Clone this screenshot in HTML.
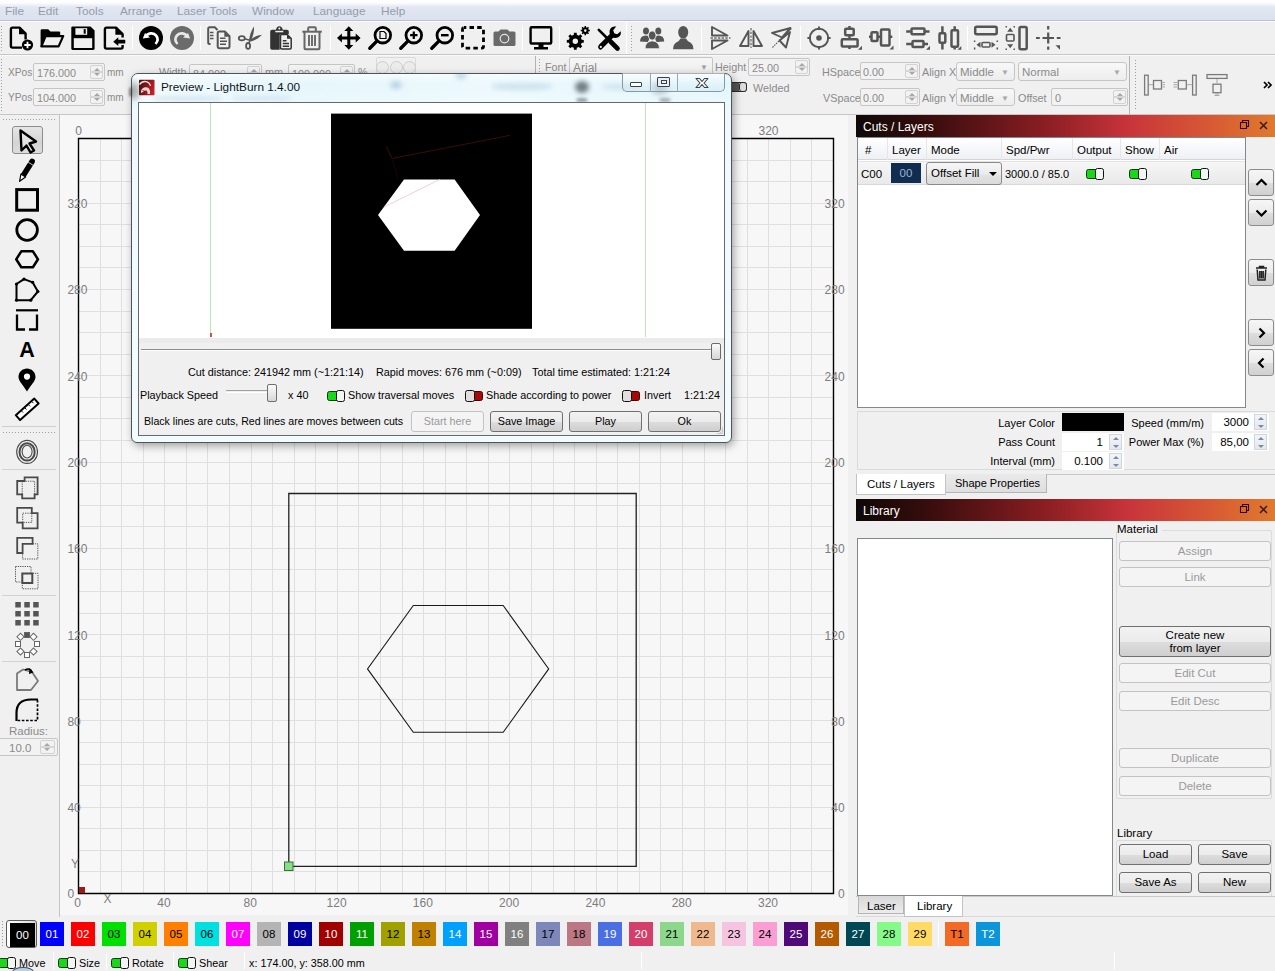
<!DOCTYPE html>
<html><head><meta charset="utf-8">
<style>
*{box-sizing:border-box;margin:0;padding:0}
html,body{width:1275px;height:971px;overflow:hidden;background:#f0f0f0;font-family:"Liberation Sans",sans-serif;font-size:11px;color:#000;position:relative}
.a{position:absolute}
.t{position:absolute;white-space:nowrap;line-height:1}
#menubar{left:0;top:0;width:1275px;height:21px;background:linear-gradient(#ffffff 0px,#fbfcfd 3px,#e2e7f1 7px,#dbe2ee 19px);border-bottom:1px solid #b9c1cd}
#menubar .t{top:5.5px;font-size:11.8px;color:#959cab}
.sep{position:absolute;width:1px;background:#c9c9c9;border-right:1px solid #fff}
.grip{position:absolute;width:3px;background-image:radial-gradient(#9a9a9a 0.7px,transparent 0.8px);background-size:3px 3px}
.ib{position:absolute}
.spin{position:absolute;background:#f2f2f2;border:1px solid #c5c5c5;border-radius:2px;color:#8a8a8a;font-size:11.5px}
.spin .v{position:absolute;left:3px;top:3px;font-size:10.8px}
.spin .ar{position:absolute;right:1px;top:1px;bottom:1px;width:13px;border:1px solid #d2d2d2;border-radius:2px;background:linear-gradient(transparent 45%,#d6d6d6 45%,#d6d6d6 55%,transparent 55%)}
.lbl{position:absolute;white-space:nowrap;color:#8a8a8a;font-size:10.8px;line-height:1}
.btn{position:absolute;border:1px solid #707070;border-radius:3px;background:linear-gradient(#f2f2f2,#ebebeb 50%,#dddddd 51%,#cfcfcf);text-align:center;font-size:11.5px;color:#000}
.btnd{position:absolute;border:1px solid #c3c3c3;border-radius:3px;background:#f4f4f4;text-align:center;font-size:11.5px;color:#9a9a9a}
.pc{font-size:11.5px;text-align:center;line-height:24px}
.tg{position:absolute;width:16px;height:10px}
.tg::before{content:"";position:absolute;left:0;top:1px;width:10px;height:8px;background:#18d818;border:1.2px solid #0c3a0c;border-radius:2.5px 0 0 2.5px}
.tg::after{content:"";position:absolute;left:8.5px;top:0;width:7.5px;height:10px;border:1.4px solid #101010;border-radius:2.5px;background:#f2f6f2}
.stt{top:958px;font-size:10.8px;color:#000}
.cmb{position:absolute;border:1px solid #c5c5c5;border-radius:3px;background:linear-gradient(#f8f8f8,#ededed);color:#8a8a8a;font-size:11.5px}
.cb{position:absolute;right:5px;top:6px;font-size:8px;color:#a8a8a8;line-height:1}
.spin .ar::before{content:"";position:absolute;left:3px;top:2px;border-left:3px solid transparent;border-right:3px solid transparent;border-bottom:3.5px solid #a8a8a8}
.spin .ar::after{content:"";position:absolute;left:3px;bottom:2px;border-left:3px solid transparent;border-right:3px solid transparent;border-top:3.5px solid #a8a8a8}
.ttl{background:linear-gradient(90deg,#0e0808 0%,#3a0d0d 18%,#8a1e22 45%,#c8343a 65%,#d85a34 85%,#e07a2c 100%)}
.ttl .t{color:#fff;font-size:12px;top:6px !important}
.hd{top:145px;font-size:11.5px;color:#000}
.sbtn{position:absolute;width:26px;height:27px;border:1px solid #8c8c8c;border-radius:3px;background:linear-gradient(#f6f6f6,#ececec 50%,#dedede 51%,#d0d0d0)}
.pl{font-size:11px;color:#000}
.pspin{position:absolute;height:18px;background:#fff;font-size:11.5px}
.pspin .ar{position:absolute;right:2px;top:1px;width:13px;height:16px;border:1px solid #cfd6e0;background:linear-gradient(#f2f4f8,#e4e8ee)}
.pspin .ar::before{content:"";position:absolute;left:2.5px;top:1.5px;border-left:3px solid transparent;border-right:3px solid transparent;border-bottom:3.5px solid #7a8aa0}
.pspin .ar::after{content:"";position:absolute;left:2.5px;bottom:1.5px;border-left:3px solid transparent;border-right:3px solid transparent;border-top:3.5px solid #7a8aa0}
.lbtn{width:152px;line-height:18px}
.dt{font-size:10.8px;color:#000}
.tgr{position:absolute;width:16px;height:10px}
.tgr::before{content:"";position:absolute;left:6px;top:1px;width:10px;height:8px;background:#a80808;border:1.2px solid #3a0404;border-radius:0 2.5px 2.5px 0}
.tgr::after{content:"";position:absolute;left:0;top:0;width:7.5px;height:10px;border:1.4px solid #101010;border-radius:2.5px;background:#e2dede}
</style></head><body>

<!-- MENU BAR -->
<div id="menubar" class="a">
 <span class="t" style="left:5px">File</span>
 <span class="t" style="left:38px">Edit</span>
 <span class="t" style="left:76px">Tools</span>
 <span class="t" style="left:120px">Arrange</span>
 <span class="t" style="left:177px">Laser Tools</span>
 <span class="t" style="left:252px">Window</span>
 <span class="t" style="left:313px">Language</span>
 <span class="t" style="left:381px">Help</span>
</div>

<!-- MAIN TOOLBAR -->
<div class="a" style="left:0;top:21px;width:1275px;height:34px;border-bottom:1px solid #c6c6c6;box-shadow:inset 0 1px 0 #fbfbfb"></div>
<div class="a" style="left:0;top:25px;width:3px;height:28px;background-image:radial-gradient(#a0a0a0 0.7px,transparent 0.8px);background-size:3px 3px"></div>
<div class="sep" style="left:132px;top:26px;height:24px"></div>
<div class="sep" style="left:200px;top:26px;height:24px"></div>
<div class="sep" style="left:330px;top:26px;height:24px"></div>
<div class="sep" style="left:522px;top:26px;height:24px"></div>
<div class="sep" style="left:559px;top:26px;height:24px"></div>
<div class="sep" style="left:626px;top:22px;height:32px"></div>
<div class="a" style="left:630px;top:25px;width:3px;height:28px;background-image:radial-gradient(#a0a0a0 0.7px,transparent 0.8px);background-size:3px 3px"></div>
<div class="sep" style="left:701px;top:26px;height:24px"></div>
<div class="sep" style="left:800px;top:26px;height:24px"></div>
<div class="sep" style="left:899px;top:26px;height:24px"></div>
<div class="sep" style="left:967px;top:26px;height:24px"></div>
<svg class="a" style="left:0;top:0" width="1275" height="60" viewBox="0 0 1275 60">
<!-- new -->
<g transform="translate(9,26)">
 <path d="M13 21.6H3.5Q1.9 21.6 1.9 20V3.2Q1.9 1.6 3.5 1.6H10.5L16.6 7.7V13.5" fill="none" stroke="#000" stroke-width="2.4" stroke-linejoin="round"/>
 <path d="M10 1.6V8.3H16.6Z" fill="#000"/>
 <circle cx="18.5" cy="19" r="5.6" fill="#000"/>
 <path d="M18.5 15.8V22.2M15.3 19H21.7" stroke="#fff" stroke-width="1.8"/>
</g>
<!-- open -->
<g transform="translate(40,26)">
 <path d="M0.6 20.5V4.6Q0.6 3.2 2 3.2H8.2L10.4 5.4H19.2Q20.2 5.4 20.2 6.4V9.3H6L1.5 20.5Z" fill="#000"/>
 <path d="M5.6 10.1H23.2L18.6 20.4H1.4Z" fill="none" stroke="#000" stroke-width="2.2" stroke-linejoin="round"/>
</g>
<!-- save -->
<g transform="translate(71,26)">
 <path d="M1.5 0.5H19.5L23.6 4.6V22.6Q23.6 24 22.2 24H1.6Q0.3 24 0.3 22.6V1.7Q0.3 0.5 1.5 0.5Z" fill="#000"/>
 <rect x="4.4" y="2.2" width="11.8" height="6.6" fill="#f0f0f0"/>
 <rect x="12.7" y="3.1" width="2" height="4.6" fill="#000"/>
 <rect x="2.8" y="12.2" width="18.4" height="9.8" fill="#f0f0f0"/>
</g>
<!-- import -->
<g transform="translate(103,26)">
 <path d="M19.6 19V21Q19.6 22.6 18 22.6H3.5Q1.9 22.6 1.9 21V3.2Q1.9 1.6 3.5 1.6H13L19.6 8.2V11.5" fill="none" stroke="#000" stroke-width="2.4" stroke-linejoin="round"/>
 <path d="M12.4 1.6V8.8H19.6Z" fill="#000"/>
 <path d="M10.2 15.7L15.3 11.3V13.8H21.7Q22.3 13.8 22.3 14.4V17Q22.3 17.6 21.7 17.6H15.3V20.1Z" fill="#000"/>
</g>
<!-- undo -->
<circle cx="151" cy="38" r="12" fill="#000"/>
<path d="M146 36.5C147.5 33 153.5 32 156.2 35.6C158.5 38.6 157.3 42 155.5 44" fill="none" stroke="#fff" stroke-width="2.6"/>
<path d="M142.8 38.6L145 33L150 37.5Z" fill="#fff"/>
<!-- redo -->
<circle cx="182" cy="38" r="12" fill="#6b6b6b"/>
<path d="M187 36.5C185.5 33 179.5 32 176.8 35.6C174.5 38.6 175.7 42 177.5 44" fill="none" stroke="#e8e8e8" stroke-width="2.6"/>
<path d="M190.2 38.6L188 33L183 37.5Z" fill="#e8e8e8"/>
<!-- copy -->
<g fill="none" stroke="#555" stroke-width="2" stroke-linejoin="round">
 <path d="M209.5 44H209.8Q208.2 44 208.2 42.5V28.8Q208.2 27.3 209.8 27.3H214.8L217.5 30"/>
 <path d="M219.2 31.5H224.8L229.5 36.2V46.8Q229.5 48.2 228 48.2H219.2Q217.7 48.2 217.7 46.8V33Q217.7 31.5 219.2 31.5Z" fill="#f0f0f0"/>
</g>
<path d="M210 32.5H213.5M210 35.5H213.5M210 38.5H213.5M220 38.2H225.5M220 41.2H227M220 44.2H226" stroke="#555" stroke-width="1.5"/>
<path d="M224.3 31.5V36.7H229.5Z" fill="#555"/>
<!-- cut -->
<g fill="none" stroke="#555" stroke-width="1.8">
 <ellipse cx="241.8" cy="38.3" rx="3" ry="2.1"/>
 <ellipse cx="248.1" cy="45.9" rx="2" ry="2.9"/>
</g>
<path d="M249 40.8Q250 32 254 26.5Q254.5 34 250.5 41.5Z" fill="#555"/>
<path d="M250.5 39.5Q256 35 262 34.8Q258 39.5 251 41.5Z" fill="#555"/>
<path d="M244.5 38.8L250 40.2M248.6 43L250 41" stroke="#555" stroke-width="1.4"/>
<!-- paste -->
<path d="M272 29.8H276Q276.5 26.3 279.3 26.3Q282.2 26.3 282.7 29.8H287Q288.8 29.8 288.8 31.6V34H281Q279.7 34 279.7 35.3V49.7H272Q270.2 49.7 270.2 48V31.6Q270.2 29.8 272 29.8Z" fill="#333"/>
<path d="M275.3 30.8H283.3V32.3H275.3Z" fill="#f0f0f0"/>
<circle cx="279.3" cy="28.6" r="1" fill="#f0f0f0"/>
<path d="M281.5 34.5H287.2L291.2 38.5V47.8Q291.2 49 290 49H281.7Q280.5 49 280.5 47.8V35.5Q280.5 34.5 281.5 34.5Z" fill="#f0f0f0" stroke="#333" stroke-width="1.5" stroke-linejoin="round"/>
<path d="M287 34.5V38.8H291.2Z" fill="#333"/>
<path d="M282.8 40.8H286.5M282.8 43.5H289M282.8 46.2H289" stroke="#333" stroke-width="1.4"/>
<!-- trash -->
<g fill="none" stroke="#666" stroke-width="2">
 <path d="M302.3 31.7H321.8"/>
 <path d="M308.2 31V28.3Q308.2 27.3 309.2 27.3H314.8Q315.8 27.3 315.8 28.3V31"/>
 <path d="M304.5 32V48.2Q304.5 49.2 305.5 49.2H318.5Q319.5 49.2 319.5 48.2V32"/>
 <path d="M309 35V46M312 35V46M315 35V46" stroke-width="1.9"/>
</g>
<!-- move -->
<path d="M348.8 26.2L353.3 31H350.3V36.6H355.7V33.6L360.6 38L355.7 42.4V39.4H350.3V45H353.3L348.8 49.8L344.3 45H347.3V39.4H341.9V42.4L337 38L341.9 33.6V36.6H347.3V31H344.3Z" fill="#000"/>
<!-- zoom page -->
<g fill="none" stroke="#000">
 <circle cx="382.8" cy="35.2" r="7.8" stroke-width="2.8"/>
 <path d="M376.6 41.4L369.8 48.2" stroke-width="3.4" stroke-linecap="round"/>
 <path d="M380 31.5H384L386 33.5V38.5H380Z" stroke-width="1.2"/>
</g>
<!-- zoom in -->
<g fill="none" stroke="#000">
 <circle cx="413.8" cy="35.2" r="7.8" stroke-width="2.8"/>
 <path d="M407.6 41.4L400.8 48.2" stroke-width="3.4" stroke-linecap="round"/>
 <path d="M413.8 31.5V38.9M410.1 35.2H417.5" stroke-width="2.2"/>
</g>
<!-- zoom out -->
<g fill="none" stroke="#000">
 <circle cx="444.8" cy="35.2" r="7.8" stroke-width="2.8"/>
 <path d="M438.6 41.4L431.8 48.2" stroke-width="3.4" stroke-linecap="round"/>
 <path d="M441 35.2H448.6" stroke-width="2.4"/>
</g>
<!-- dashed select -->
<rect x="462.5" y="27.5" width="21" height="20.6" rx="1.5" fill="none" stroke="#000" stroke-width="2.8" stroke-dasharray="4.5 3.2" stroke-dashoffset="2.2"/>
<!-- camera -->
<path d="M493.5 33Q493.5 31.5 495 31.5H498.5L500.5 29.5H507.5L509.5 31.5H514Q515.5 31.5 515.5 33V44.5Q515.5 46 514 46H495Q493.5 46 493.5 44.5Z" fill="#6a6a6a"/>
<circle cx="504.5" cy="38.6" r="4.3" fill="none" stroke="#e6e6e6" stroke-width="1.2"/>
<circle cx="504.5" cy="38.6" r="3.2" fill="#6a6a6a"/>
<!-- monitor -->
<rect x="530.6" y="27.2" width="20.6" height="16.3" rx="1" fill="none" stroke="#000" stroke-width="2.4"/>
<path d="M538.5 43.5H543.5V47H548V49.5H534V47H538.5Z" fill="#000"/>
<!-- gears -->
<path d="M581.73 39.81L583.78 39.89L583.78 42.71L581.73 42.79L580.90 44.79L582.30 46.30L580.30 48.30L578.79 46.90L576.79 47.73L576.71 49.78L573.89 49.78L573.81 47.73L571.81 46.90L570.30 48.30L568.30 46.30L569.70 44.79L568.87 42.79L566.82 42.71L566.82 39.89L568.87 39.81L569.70 37.81L568.30 36.30L570.30 34.30L571.81 35.70L573.81 34.87L573.89 32.82L576.71 32.82L576.79 34.87L578.79 35.70L580.30 34.30L582.30 36.30L580.90 37.81Z M575.3 38.6A2.7 2.7 0 1 0 575.3 44A2.7 2.7 0 1 0 575.3 38.6Z" fill="#000" fill-rule="evenodd"/>
<path d="M588.61 29.83L589.84 29.84L589.84 31.36L588.61 31.37L588.18 32.40L589.04 33.27L587.97 34.34L587.10 33.48L586.07 33.91L586.06 35.14L584.54 35.14L584.53 33.91L583.50 33.48L582.63 34.34L581.56 33.27L582.42 32.40L581.99 31.37L580.76 31.36L580.76 29.84L581.99 29.83L582.42 28.80L581.56 27.93L582.63 26.86L583.50 27.72L584.53 27.29L584.54 26.06L586.06 26.06L586.07 27.29L587.10 27.72L587.97 26.86L589.04 27.93L588.18 28.80Z M585.3 29.3A1.3 1.3 0 1 0 585.3 31.9A1.3 1.3 0 1 0 585.3 29.3Z" fill="#000" fill-rule="evenodd"/>
<!-- tools -->
<path d="M598.8 29.8L607.5 38.5" stroke="#000" stroke-width="2.6" stroke-linecap="round"/>
<path d="M610.5 41.5L617.5 48.5" stroke="#000" stroke-width="4.6" stroke-linecap="round"/>
<path d="M599 44.8L609.8 34Q608.8 29.5 611.5 27.5Q613.5 26 616.2 26.6L613.2 30.2L614.2 33.2L617.2 34.2L620.8 31.2Q621.3 34 619.8 36Q617.8 38.5 613.2 37.8L602.2 48.8Q600.5 50.5 598.8 48.8Q597.2 47 599 44.8Z" fill="#000"/>
<circle cx="600.8" cy="46.9" r="1.1" fill="#f0f0f0"/>
<!-- group -->
<g fill="#555">
 <ellipse cx="646" cy="31" rx="3" ry="3.6"/><path d="M640 41.5Q640 35.5 646 35.5Q648.5 35.5 650 37L648 42Z"/>
 <ellipse cx="658.3" cy="31" rx="3" ry="3.6"/><path d="M664.2 41.5Q664.2 35.5 658.3 35.5Q655.8 35.5 654.3 37L656.5 42Z"/>
 <ellipse cx="652.2" cy="35.5" rx="3.8" ry="4.6" stroke="#f0f0f0" stroke-width="0.9"/><path d="M645 48.8Q645 41.5 652.2 40.8Q659.5 41.5 659.5 48.8Z" stroke="#f0f0f0" stroke-width="0.9"/>
</g>
<!-- ungroup -->
<g fill="#555">
 <ellipse cx="683.2" cy="32.2" rx="5" ry="6.3"/>
 <path d="M673 49.2Q673 43 678.5 41.2L680.5 38.5H686L688 41.2Q693.5 43 693.5 49.2Z"/>
</g>
<!-- mirror h -->
<g fill="none" stroke="#555" stroke-width="1.9" stroke-linejoin="round">
 <path d="M712 27V35.5H727.5Z"/>
 <path d="M712 49V40.5H727.5Z"/>
</g>
<path d="M710.5 38H730.5" stroke="#8a8a8a" stroke-width="2" stroke-dasharray="2.4 1.3"/>
<!-- mirror v -->
<g fill="none" stroke="#555" stroke-width="1.9" stroke-linejoin="round">
 <path d="M748.5 31V46H740Z"/>
 <path d="M753.5 31V46H762Z"/>
</g>
<path d="M751 28V48" stroke="#9a9a9a" stroke-width="2" stroke-dasharray="2.4 1.3"/>
<!-- rotate/skew -->
<g fill="none" stroke="#555" stroke-width="1.9" stroke-linejoin="round">
 <path d="M772 33L790.5 28L782 37.5Z"/>
 <path d="M790 32L786 47.5L779.5 40.5Z"/>
</g>
<path d="M772.5 47.5L791.5 28.5" stroke="#555" stroke-width="1.1" stroke-dasharray="1.5 1"/>
<!-- target -->
<g fill="none" stroke="#555">
 <circle cx="819" cy="38" r="9.2" stroke-width="1.9"/>
 <path d="M819 26.4V30M819 46V49.6M807.4 38H811M827 38H830.6" stroke-width="1.9"/>
</g>
<circle cx="819" cy="38" r="2.8" fill="#555"/>
<!-- align center -->
<g fill="none" stroke="#555" stroke-width="2.5">
 <rect x="845.2" y="28.8" width="8.5" height="6.5" rx="1"/>
 <rect x="841.8" y="39.2" width="15.8" height="7.3" rx="1"/>
 <path d="M849.5 26V28.5M849.5 35.5V39M849.5 46.5V49"/>
</g>
<path d="M858 49.8L862 45.8V49.8Z" fill="#555"/>
<!-- align middle -->
<g fill="none" stroke="#555" stroke-width="2.5">
 <rect x="871.5" y="32.2" width="6" height="8.7" rx="1"/>
 <rect x="881" y="29.5" width="8.5" height="16" rx="1"/>
 <path d="M869 36.7H871.5M877.5 36.7H881M889.5 36.7H892.3"/>
</g>
<path d="M889.5 49.5L893.5 45.5V49.5Z" fill="#555"/>
<!-- distribute h -->
<g fill="none" stroke="#555" stroke-width="2.5">
 <rect x="911.5" y="28.5" width="13" height="5.8" rx="1"/>
 <rect x="912.5" y="41" width="11" height="6" rx="1"/>
 <path d="M906.2 31.4H911.5M924.5 31.4H929.5M906.2 44H912.5M923.5 44H928"/>
</g>
<path d="M926 49.8L930 45.8V49.8Z" fill="#555"/>
<!-- distribute v -->
<g fill="none" stroke="#555" stroke-width="2.5">
 <rect x="939.5" y="33.2" width="5.8" height="9.5" rx="1"/>
 <rect x="951.5" y="30.2" width="6.5" height="16.5" rx="1"/>
 <path d="M942.4 26.2V33.2M942.4 42.7V49.6M954.7 26.2V30.2M954.7 46.7V49.6"/>
</g>
<path d="M957.5 49.8L961.3 46V49.8Z" fill="#555"/>
<!-- size width -->
<g fill="none" stroke="#555">
 <rect x="975.2" y="26.8" width="21.5" height="7.5" rx="1.5" stroke-width="2.5"/>
 <rect x="982" y="42.5" width="8" height="4.5" rx="1" stroke-width="1.6"/>
</g>
<path d="M976.5 44.7L980.5 41.7V47.7Z M995.5 44.7L991.5 41.7V47.7Z" fill="#555"/>
<path d="M974.6 40.5V42M974.6 47.5V49.5M997.3 40.5V42M997.3 47.5V49.5" stroke="#555" stroke-width="1.5"/>
<!-- size height -->
<g fill="none" stroke="#555">
 <rect x="1019.5" y="27" width="7.2" height="22.2" rx="1.5" stroke-width="2.5"/>
 <rect x="1006.5" y="34.5" width="7.5" height="6.5" rx="1" stroke-width="1.6"/>
</g>
<path d="M1010.2 27.8L1007.2 31.8H1013.2Z M1010.2 48.2L1007.2 44.2H1013.2Z" fill="#555"/>
<path d="M1005.5 26.8H1007M1013.5 26.8H1015M1005.5 49.2H1007M1013.5 49.2H1015" stroke="#555" stroke-width="1.5"/>
<!-- center -->
<path d="M1048.2 26V29.5M1048.2 32.5V43.5M1048.2 46.5V49.8M1036 38H1039.8M1042.5 38H1054M1056.8 38H1060.5" stroke="#555" stroke-width="2.2"/>
<path d="M1060 49.8L1055.5 45.3H1060Z" fill="#555"/>
</svg>


<!-- PROPERTY TOOLBAR -->
<div class="a" style="left:0;top:55px;width:1275px;height:60px;border-bottom:1px solid #c6c6c6;box-shadow:inset 0 1px 0 #fafafa"></div>
<div class="a" style="left:0;top:58px;width:3px;height:54px;background-image:radial-gradient(#a0a0a0 0.7px,transparent 0.8px);background-size:3px 3px"></div>
<span class="lbl" style="left:8px;top:68px;font-size:10.2px">XPos</span>
<div class="spin" style="left:33px;top:63px;width:72px;height:18px"><span class="v">176.000</span><div class="ar"></div></div>
<span class="lbl" style="left:107px;top:68px;font-size:10px">mm</span>
<span class="lbl" style="left:8px;top:93px;font-size:10.2px">YPos</span>
<div class="spin" style="left:33px;top:88px;width:72px;height:18px"><span class="v">104.000</span><div class="ar"></div></div>
<span class="lbl" style="left:107px;top:93px;font-size:10px">mm</span>
<span class="lbl" style="left:159px;top:67px">Width</span>
<div class="spin" style="left:189px;top:64px;width:73px;height:18px"><span class="v">84.000</span><div class="ar"></div></div>
<span class="lbl" style="left:265px;top:67px">mm</span>
<div class="spin" style="left:288px;top:64px;width:67px;height:18px"><span class="v">100.000</span><div class="ar"></div></div>
<span class="lbl" style="left:358px;top:67px">%</span>
<div class="a" style="left:376px;top:57px;width:40px;height:20px;border:1px solid #dadada;border-radius:2px;"></div>
<div class="a" style="left:376px;top:61px;width:13px;height:13px;border:1px solid #cdcdcd;border-radius:50%;background:#ececec"></div>
<div class="a" style="left:389.5px;top:61px;width:13px;height:13px;border:1px solid #cdcdcd;border-radius:50%;background:#ececec"></div>
<div class="a" style="left:403px;top:61px;width:13px;height:13px;border:1px solid #cdcdcd;border-radius:50%;background:#ececec"></div>
<div class="a" style="left:535px;top:56px;width:1px;height:58px;background:#b4b4b4"></div>
<div class="a" style="left:538px;top:58px;width:3px;height:54px;background-image:radial-gradient(#a0a0a0 0.7px,transparent 0.8px);background-size:3px 3px"></div>
<span class="lbl" style="left:545px;top:62px">Font</span>
<div class="a" style="left:569px;top:57px;width:144px;height:20px;border:1px solid #c5c5c5;border-radius:2px;background:linear-gradient(#f6f6f6,#ececec)"><span class="t" style="left:3px;top:4px;font-size:12px;color:#8a8a8a">Arial</span><span class="t" style="right:4px;top:6px;font-size:8px;color:#a0a0a0">&#9660;</span></div>
<span class="lbl" style="left:715px;top:62px">Height</span>
<div class="spin" style="left:748px;top:58px;width:62px;height:18px"><span class="v" style="left:3px">25.00</span><div class="ar"></div></div>
<div class="a" style="left:729px;top:82px;width:18px;height:10px;border:1px solid #2a2a2a;border-radius:3px;background:linear-gradient(90deg,#555 0,#555 55%,#ddd 55%)"></div>
<div class="a" style="left:739px;top:82px;width:8px;height:10px;border:1px solid #2a2a2a;border-radius:3px;background:#dcdcdc"></div>
<span class="lbl" style="left:753px;top:83px">Welded</span>
<span class="lbl" style="left:822px;top:67px">HSpace</span>
<div class="spin" style="left:860px;top:62px;width:60px;height:18px"><span class="v" style="left:2px">0.00</span><div class="ar"></div></div>
<span class="lbl" style="left:922px;top:67px">Align X</span>
<div class="cmb" style="left:956px;top:62px;width:59px;height:19px"><span class="t" style="left:3px;top:4px">Middle</span><span class="cb">&#9660;</span></div>
<div class="cmb" style="left:1018px;top:62px;width:109px;height:19px"><span class="t" style="left:3px;top:4px">Normal</span><span class="cb">&#9660;</span></div>
<span class="lbl" style="left:823px;top:93px">VSpace</span>
<div class="spin" style="left:860px;top:88px;width:60px;height:18px"><span class="v" style="left:2px">0.00</span><div class="ar"></div></div>
<span class="lbl" style="left:922px;top:93px">Align Y</span>
<div class="cmb" style="left:956px;top:88px;width:59px;height:18px"><span class="t" style="left:3px;top:4px">Middle</span><span class="cb">&#9660;</span></div>
<span class="lbl" style="left:1018px;top:93px">Offset</span>
<div class="spin" style="left:1051px;top:88px;width:77px;height:18px"><span class="v" style="left:3px">0</span><div class="ar"></div></div>
<div class="a" style="left:1129px;top:56px;width:1px;height:58px;background:#b4b4b4"></div>
<div class="a" style="left:1134px;top:59px;width:3px;height:52px;background-image:radial-gradient(#a0a0a0 0.7px,transparent 0.8px);background-size:3px 3px"></div>
<svg class="a" style="left:1140px;top:70px" width="100" height="30" viewBox="1140 70 100 30">
<g fill="none" stroke="#7a7a7a" stroke-width="1.3">
 <rect x="1144.6" y="75.2" width="3.6" height="19.8"/>
 <rect x="1153.5" y="80.5" width="8" height="8.5"/>
 <rect x="1192.6" y="75.2" width="3.6" height="19.8"/>
 <rect x="1178.3" y="80.5" width="8" height="8.5"/>
 <rect x="1207" y="74.6" width="20" height="3.8"/>
 <rect x="1213" y="84.2" width="8" height="8.5"/>
</g>
<path d="M1149 84.7H1153M1162.5 82.5H1165M1162.5 84.7H1165M1162.5 87H1165M1186.5 84.7H1192.5M1173.5 82.5H1177M1173.5 84.7H1177M1173.5 87H1177M1217 79V83.5M1215 94H1219M1214.5 95.5H1219.5" stroke="#a0a0a0" stroke-width="0.9"/>
</svg>
<svg class="a" style="left:1263px;top:81px" width="10" height="8"><path d="M1 1L4 4L1 7M5 1L8 4L5 7" fill="none" stroke="#000" stroke-width="1.7"/></svg>


<!-- LEFT TOOLBOX -->
<div class="a" style="left:0;top:115px;width:60px;height:802px;border-right:1px solid #c4c4c4;"></div>
<div class="a" style="left:2px;top:118px;width:54px;height:3px;background-image:radial-gradient(#a0a0a0 0.7px,transparent 0.8px);background-size:3px 3px"></div>
<div class="a" style="left:12px;top:126px;width:31px;height:28px;border:1px solid #8c8c8c;border-radius:3px;background:linear-gradient(#e6e6e6,#d4d4d4 60%,#dcdcdc)"></div>
<div class="a" style="left:2px;top:426px;width:54px;height:1px;background:#cfcfcf"></div>
<div class="a" style="left:2px;top:431px;width:54px;height:3px;background-image:radial-gradient(#a0a0a0 0.7px,transparent 0.8px);background-size:3px 3px"></div>
<div class="a" style="left:2px;top:469px;width:54px;height:1px;background:#d2d2d2"></div>
<div class="a" style="left:2px;top:595px;width:54px;height:1px;background:#d2d2d2"></div>
<div class="a" style="left:2px;top:661px;width:54px;height:1px;background:#d2d2d2"></div>
<span class="t" style="left:9px;top:726px;font-size:11.5px;color:#8a8a8a">Radius:</span>
<div class="spin" style="left:-2px;top:738px;width:60px;height:18px"><span class="v" style="left:10px;top:3px;font-size:11.5px">10.0</span><div class="ar" style="right:2px;width:15px"></div></div>
<svg class="a" style="left:0;top:0" width="60" height="971" viewBox="0 0 60 971">
<g fill="none" stroke="#000">
 <!-- select arrow -->
 <path d="M20.5 130.5L36 141.5L29.5 143.5L34 150.5L30.5 152.5L26.5 145.5L21.5 150.5Z" stroke-width="2.4" stroke-linejoin="round" fill="#e4e4e4"/>
 <!-- pencil -->
 <path d="M25.6 177.1L34.6 162.7A2.8 2.8 0 0 0 29.9 159.7L20.9 174.1Z" fill="#000" stroke="none"/>
 <path d="M25.6 177.1L20.9 174.1L19.6 181.3Z" fill="#fff" stroke-width="1.2" stroke-linejoin="round"/>
 <path d="M33.2 165.3L28.2 162.2" stroke="#fff" stroke-width="0.8"/>
 <!-- rect -->
 <rect x="16.7" y="189.6" width="20.8" height="20.6" stroke-width="3"/>
 <!-- circle -->
 <circle cx="27.1" cy="230" r="10.3" stroke-width="2.8"/>
 <!-- hexagon -->
 <path d="M21.3 251.3H32.9L38 259.3L32.9 267.2H21.3L16.2 259.3Z" stroke-width="2.5" stroke-linejoin="round"/>
 <!-- polygon -->
 <path d="M16.5 284L24 279.1L32.7 282.4L37.9 291.5L30.8 300.2L16.5 300.2Z" stroke-width="2" stroke-linejoin="round"/>
 <g fill="#000" stroke="none"><circle cx="16.5" cy="284" r="1.6"/><circle cx="24" cy="279.1" r="1.6"/><circle cx="32.7" cy="282.4" r="1.6"/><circle cx="37.9" cy="291.5" r="1.6"/><circle cx="30.8" cy="300.2" r="1.6"/><circle cx="16.5" cy="300.2" r="1.6"/></g>
 <!-- frame bracket -->
 <path d="M16 310.3H38" stroke-width="2.2"/>
 <path d="M17 314.5V329.5H25M29 329.5H37V314.5" stroke-width="2.3"/>
 <!-- pin -->
 <path d="M27 391.5C23 385 18.5 381 18.5 377C18.5 372 22.5 368.5 27 368.5C31.5 368.5 35.5 372 35.5 377C35.5 381 31 385 27 391.5Z" fill="#000" stroke="none"/>
 <circle cx="27" cy="376.6" r="3.1" fill="#fff" stroke="none"/>
 <!-- ruler -->
 <path d="M15.8 415.2L34.3 398.6L38.6 403.5L20.1 420.1Z" stroke-width="2" stroke-linejoin="round" fill="#fff"/>
 <path d="M23 412.5L21.5 411M26.5 409.5L25 408M30 406.3L28.5 404.8M33.5 403.2L32 401.7" stroke-width="1"/>
</g>
<text x="27" y="357.3" text-anchor="middle" font-family="Liberation Sans" font-weight="bold" font-size="21.5" fill="#000">A</text>
<g fill="none" stroke="#4a4a4a">
 <!-- offset O -->
 <ellipse cx="27.1" cy="451.9" rx="10.4" ry="11.5" stroke-width="1.1"/>
 <ellipse cx="27.1" cy="451.9" rx="7.6" ry="8.7" stroke-width="2"/>
 <ellipse cx="27.1" cy="451.6" rx="5" ry="6.4" stroke-width="1.1"/>
 <!-- union -->
 <path d="M24.6 477.3H37.6V494.4H34.6V498.3H22.2V494.4H17.2V481H24.6Z" stroke-width="1.8"/>
 <path d="M22.2 494V481.2H34.6V494" stroke-width="0.9" stroke-dasharray="1.3 1"/>
 <!-- subtract -->
 <path d="M17.2 507.8H31.8V513.2H37.6V528.4H22.7V522.6H17.2Z" stroke-width="1.8"/>
 <path d="M22.7 522.4V513.2H31.8V522.4H22.9" stroke-width="0.9" stroke-dasharray="1.3 1"/>
 <!-- intersect -->
 <path d="M17.2 553V537.8H32.6V543.8H22.6V553Z" stroke-width="1.8"/>
 <path d="M32.6 543.8H37.8V559H22.6V553" stroke-width="0.9" stroke-dasharray="1.3 1"/>
 <!-- exclusion -->
 <path d="M15.5 566.5H31V572.8M15.5 566.5V582H21.4M32.8 573.3H38V588.8H22.3V584" stroke-width="0.9" stroke-dasharray="1.3 1"/>
 <rect x="22.3" y="573.5" width="10" height="9.5" stroke-width="2"/>
</g>
<g fill="#555">
 <rect x="15.3" y="602" width="5.5" height="5.5"/><rect x="24.3" y="602" width="5.5" height="5.5"/><rect x="33.2" y="602" width="5.5" height="5.5"/>
 <rect x="15.3" y="611" width="5.5" height="5.5"/><rect x="24.3" y="611" width="5.5" height="5.5"/><rect x="33.2" y="611" width="5.5" height="5.5"/>
 <rect x="15.3" y="620" width="5.5" height="5.5"/><rect x="24.3" y="620" width="5.5" height="5.5"/><rect x="33.2" y="620" width="5.5" height="5.5"/>
</g>
<g fill="#fff" stroke="#666" stroke-width="1">
 <rect x="24.5" y="632.5" width="5" height="5" fill="#555"/>
 <rect x="-2.5" y="-2.5" width="5" height="5" transform="translate(33.5 636.8) rotate(45)"/>
 <rect x="34.5" y="641.5" width="5" height="5"/>
 <rect x="-2.5" y="-2.5" width="5" height="5" transform="translate(33.5 651.5) rotate(45)"/>
 <rect x="24.5" y="652.5" width="5" height="5"/>
 <rect x="-2.5" y="-2.5" width="5" height="5" transform="translate(20.5 651.5) rotate(45)"/>
 <rect x="15.5" y="641.5" width="5" height="5"/>
 <rect x="-2.5" y="-2.5" width="5" height="5" transform="translate(20.5 636.8) rotate(45)"/>
</g>
<path d="M17 673.5L23 669.5L32 672L38 681L31 690H17Z" fill="none" stroke="#7a7a7a" stroke-width="1.8" stroke-linejoin="round"/>
<path d="M25 670C28 668 31 669 32 672" fill="none" stroke="#000" stroke-width="1.6"/>
<path d="M29.5 668.5L33.5 672.5L29 674Z" fill="#000"/>
<path d="M16.5 721V713C16.5 704 22 699.5 31 699.5H38" fill="none" stroke="#000" stroke-width="2.2"/>
<path d="M37.5 700V720.5H17" fill="none" stroke="#000" stroke-width="1.7" stroke-dasharray="2.6 1.6"/>
</svg>

<!-- CANVAS -->
<div class="a" id="cv" style="left:60px;top:115px;width:795px;height:800px;background:#f7f7f7"></div>
<svg class="a" style="left:0;top:0" width="1275" height="971" viewBox="0 0 1275 971">
<path d="M100.5 139V893M121.5 139V893M143.5 139V893M164.5 139V893M186.5 139V893M207.5 139V893M229.5 139V893M251.5 139V893M272.5 139V893M294.5 139V893M315.5 139V893M337.5 139V893M358.5 139V893M380.5 139V893M402.5 139V893M423.5 139V893M445.5 139V893M466.5 139V893M488.5 139V893M509.5 139V893M531.5 139V893M553.5 139V893M574.5 139V893M596.5 139V893M617.5 139V893M639.5 139V893M660.5 139V893M682.5 139V893M704.5 139V893M725.5 139V893M747.5 139V893M768.5 139V893M790.5 139V893M811.5 139V893M79 871.5H833M79 850.5H833M79 828.5H833M79 807.5H833M79 785.5H833M79 764.5H833M79 742.5H833M79 720.5H833M79 699.5H833M79 677.5H833M79 656.5H833M79 634.5H833M79 613.5H833M79 591.5H833M79 569.5H833M79 548.5H833M79 526.5H833M79 505.5H833M79 483.5H833M79 462.5H833M79 440.5H833M79 418.5H833M79 397.5H833M79 375.5H833M79 354.5H833M79 332.5H833M79 311.5H833M79 289.5H833M79 267.5H833M79 246.5H833M79 224.5H833M79 203.5H833M79 181.5H833M79 160.5H833" stroke="#dfdfdf" stroke-width="1" fill="none"/>
<path d="M78.5 138.5H833.5V893.5H78.5Z" stroke="#000" stroke-width="1.4" fill="none"/>
<rect x="79" y="887" width="6" height="6" fill="#a01818"/>
<path d="M288.8 493.5H636.2V866.3H288.8Z" stroke="#202020" stroke-width="1.3" fill="none"/>
<path d="M413.3 605.5H503.2L548.7 668.9L503.2 732.3H413.3L367.5 668.9Z" stroke="#1a1a1a" stroke-width="1.1" fill="none"/>
<g font-family="Liberation Sans" font-size="12" fill="#7c7c7c"><text x="78.5" y="135" text-anchor="middle">0</text><text x="768.5" y="135" text-anchor="middle">320</text><text x="77.7" y="907" text-anchor="middle">0</text><text x="164.0" y="907" text-anchor="middle">40</text><text x="250.3" y="907" text-anchor="middle">80</text><text x="336.6" y="907" text-anchor="middle">120</text><text x="422.8" y="907" text-anchor="middle">160</text><text x="509.1" y="907" text-anchor="middle">200</text><text x="595.4" y="907" text-anchor="middle">240</text><text x="681.7" y="907" text-anchor="middle">280</text><text x="768.0" y="907" text-anchor="middle">320</text><text x="67.4" y="898.4">0</text><text x="844.6" y="898.4" text-anchor="end">0</text><text x="67.4" y="812.1">40</text><text x="844.6" y="812.1" text-anchor="end">40</text><text x="67.4" y="725.8">80</text><text x="844.6" y="725.8" text-anchor="end">80</text><text x="67.4" y="639.5">120</text><text x="844.6" y="639.5" text-anchor="end">120</text><text x="67.4" y="553.3">160</text><text x="844.6" y="553.3" text-anchor="end">160</text><text x="67.4" y="467.0">200</text><text x="844.6" y="467.0" text-anchor="end">200</text><text x="67.4" y="380.7">240</text><text x="844.6" y="380.7" text-anchor="end">240</text><text x="67.4" y="294.4">280</text><text x="844.6" y="294.4" text-anchor="end">280</text><text x="67.4" y="208.1">320</text><text x="844.6" y="208.1" text-anchor="end">320</text><text x="103.5" y="903">X</text><text x="71" y="868">Y</text></g>
<rect x="284.5" y="862" width="8.5" height="8.5" fill="#86e086" stroke="#3c6e3c" stroke-width="1"/>
</svg>

<!-- RIGHT DOCK -->
<div class="a" style="left:848px;top:115px;width:8px;height:802px;background:#f0f0f0"></div>
<!-- Cuts/Layers title -->
<div class="a ttl" style="left:856px;top:115px;width:419px;height:22px"><span class="t" style="left:7px;top:5px">Cuts / Layers</span></div>
<div class="a" style="left:857px;top:137px;width:389px;height:271px;background:#fff;border:1px solid #828790"></div>
<div class="a" style="left:858px;top:138px;width:387px;height:22px;background:linear-gradient(#ffffff,#f7f8fa 50%,#eef0f3);border-bottom:1px solid #d5d5d5"></div>
<div class="a" style="left:887px;top:138px;width:1px;height:22px;background:#e4e6ea"></div>
<div class="a" style="left:926px;top:138px;width:1px;height:22px;background:#e4e6ea"></div>
<div class="a" style="left:1001px;top:138px;width:1px;height:22px;background:#e4e6ea"></div>
<div class="a" style="left:1072px;top:138px;width:1px;height:22px;background:#e4e6ea"></div>
<div class="a" style="left:1120px;top:138px;width:1px;height:22px;background:#e4e6ea"></div>
<div class="a" style="left:1159px;top:138px;width:1px;height:22px;background:#e4e6ea"></div>
<span class="t hd" style="left:865px">#</span>
<span class="t hd" style="left:892px">Layer</span>
<span class="t hd" style="left:931px">Mode</span>
<span class="t hd" style="left:1006px">Spd/Pwr</span>
<span class="t hd" style="left:1077px">Output</span>
<span class="t hd" style="left:1125px">Show</span>
<span class="t hd" style="left:1164px">Air</span>
<div class="a" style="left:858px;top:161px;width:387px;height:24px;background:linear-gradient(#f6f6f6,#e9e9e9);border-top:1px solid #e4e4e4;border-bottom:1px solid #d8d8d8"></div>
<span class="t" style="left:861px;top:169px;font-size:11.5px">C00</span>
<div class="a" style="left:891px;top:163px;width:30px;height:20px;background:#102c50;color:#9db4d4;font-size:11.5px;text-align:center;line-height:20px">00</div>
<div class="a" style="left:926px;top:162px;width:76px;height:23px;border:1px solid #8a8a8a;border-radius:3px;background:linear-gradient(#f6f6f6,#ececec 50%,#e2e2e2 60%,#dadada)"><span class="t" style="left:4px;top:5px;font-size:11.5px">Offset Fill</span><div class="a" style="left:62px;top:9px;width:0;height:0;border-left:4px solid transparent;border-right:4px solid transparent;border-top:4.5px solid #000"></div></div>
<span class="t" style="left:1005px;top:169px;font-size:11px">3000.0 / 85.0</span>
<div class="tg" style="left:1086px;top:168px"></div>
<div class="tg" style="left:1129px;top:168px"></div>
<div class="tg" style="left:1191px;top:168px"></div>
<!-- side buttons -->
<div class="sbtn" style="left:1248px;top:169px"><svg width="25" height="26"><path d="M7.5 15L12.5 10L17.5 15" fill="none" stroke="#000" stroke-width="2.2"/></svg></div>
<div class="sbtn" style="left:1248px;top:199px"><svg width="25" height="26"><path d="M7.5 10.5L12.5 15.5L17.5 10.5" fill="none" stroke="#000" stroke-width="2.2"/></svg></div>
<div class="sbtn" style="left:1248px;top:259px"><svg width="25" height="26"><g fill="none" stroke="#222" stroke-width="1.5"><path d="M7 8H18M10.5 8V6.5H14.5V8M8.2 9.5L9 20H16L16.8 9.5M10.8 11V18.5M12.5 11V18.5M14.2 11V18.5"/></g></svg></div>
<div class="sbtn" style="left:1248px;top:319px"><svg width="25" height="26"><path d="M10.5 8.5L15 13L10.5 17.5" fill="none" stroke="#000" stroke-width="2.2"/></svg></div>
<div class="sbtn" style="left:1248px;top:349px"><svg width="25" height="26"><path d="M14.5 8.5L10 13L14.5 17.5" fill="none" stroke="#000" stroke-width="2.2"/></svg></div>
<!-- properties -->
<div class="a" style="left:857px;top:411px;width:418px;height:59px;border:1px solid #dadada;border-right:none"></div>
<span class="t pl" style="right:220px;top:418px">Layer Color</span>
<div class="a" style="left:1062px;top:413px;width:62px;height:18px;background:#000"></div>
<span class="t pl" style="right:71px;top:418px">Speed (mm/m)</span>
<div class="pspin" style="left:1212px;top:413px;width:57px"><span class="t" style="right:20px;top:4px">3000</span><div class="ar"></div></div>
<span class="t pl" style="right:220px;top:437px">Pass Count</span>
<div class="pspin" style="left:1062px;top:433px;width:62px"><span class="t" style="right:21px;top:4px">1</span><div class="ar"></div></div>
<span class="t pl" style="right:71px;top:437px">Power Max (%)</span>
<div class="pspin" style="left:1212px;top:433px;width:57px"><span class="t" style="right:20px;top:4px">85,00</span><div class="ar"></div></div>
<span class="t pl" style="right:220px;top:456px">Interval (mm)</span>
<div class="pspin" style="left:1062px;top:452px;width:62px"><span class="t" style="right:21px;top:4px">0.100</span><div class="ar"></div></div>
<!-- tabs -->
<div class="a" style="left:856px;top:474px;width:419px;height:1px;background:#c9c9c9"></div>
<div class="a" style="left:856px;top:474px;width:90px;height:21px;background:#fff;border:1px solid #c3c3c3;border-top:none"><span class="t" style="left:10px;top:5px;font-size:11.5px">Cuts / Layers</span></div>
<div class="a" style="left:946px;top:474px;width:101px;height:19px;background:linear-gradient(#eaeaea,#dedede);border:1px solid #b5b5b5;border-top:none;border-left:none"><span class="t" style="left:9px;top:4px;font-size:11px">Shape Properties</span></div>
<!-- Library title -->
<div class="a ttl" style="left:856px;top:499px;width:419px;height:22px"><span class="t" style="left:7px;top:5px">Library</span></div>
<div class="a" style="left:857px;top:538px;width:256px;height:358px;background:#fff;border:1px solid #828790"></div>
<span class="t" style="left:1117px;top:524px;font-size:11.5px">Material</span>
<div class="a" style="left:1116px;top:530px;width:156px;height:269px;border:1px solid #dcdcdc;border-radius:2px"></div>
<div class="a" style="left:1117px;top:524px;width:45px;height:12px;background:#f0f0f0"></div>
<span class="t" style="left:1117px;top:524px;font-size:11.5px">Material</span>
<div class="btnd lbtn" style="left:1119px;top:541px;height:20px">Assign</div>
<div class="btnd lbtn" style="left:1119px;top:567px;height:20px">Link</div>
<div class="btn lbtn" style="left:1119px;top:626px;height:31px;line-height:13px;padding-top:2px">Create new<br>from layer</div>
<div class="btnd lbtn" style="left:1119px;top:663px;height:20px">Edit Cut</div>
<div class="btnd lbtn" style="left:1119px;top:691px;height:20px">Edit Desc</div>
<div class="btnd lbtn" style="left:1119px;top:748px;height:20px">Duplicate</div>
<div class="btnd lbtn" style="left:1119px;top:776px;height:20px">Delete</div>
<div class="a" style="left:1116px;top:840px;width:156px;height:57px;border:1px solid #dcdcdc;border-radius:2px"></div>
<div class="a" style="left:1117px;top:828px;width:38px;height:12px;background:#f0f0f0"></div>
<span class="t" style="left:1117px;top:828px;font-size:11.5px">Library</span>
<div class="btn" style="left:1119px;top:844px;width:73px;height:21px;line-height:19px">Load</div>
<div class="btn" style="left:1198px;top:844px;width:73px;height:21px;line-height:19px">Save</div>
<div class="btn" style="left:1119px;top:872px;width:73px;height:21px;line-height:19px">Save As</div>
<div class="btn" style="left:1198px;top:872px;width:73px;height:21px;line-height:19px">New</div>
<div class="a" style="left:856px;top:896px;width:419px;height:1px;background:#c9c9c9"></div>
<div class="a" style="left:858px;top:896px;width:46px;height:18px;background:linear-gradient(#d8d8d8,#ececec);border:1px solid #b5b5b5;border-top:none"><span class="t" style="left:8px;top:5px;font-size:11.5px">Laser</span></div>
<div class="a" style="left:856px;top:916px;width:419px;height:1px;background:#dadada"></div>
<div class="a" style="left:904px;top:896px;width:59px;height:21px;background:#fff;border:1px solid #c3c3c3;border-top:none"><span class="t" style="left:12px;top:5px;font-size:11.5px">Library</span></div>
<!-- title icons -->
<svg class="a" style="left:1235px;top:115px" width="40" height="406" viewBox="1235 115 40 406">
<g fill="none" stroke="#2a0a05" stroke-width="1.1">
 <path d="M1240.5 122.5H1246.5V128.5H1240.5Z M1242.5 122.5V120.5H1248.5V126.5H1246.5"/>
 <path d="M1260 122L1267 129M1267 122L1260 129" stroke-width="1.5" stroke="#3a1a10"/>
 <path d="M1240.5 506.5H1246.5V512.5H1240.5Z M1242.5 506.5V504.5H1248.5V510.5H1246.5"/>
 <path d="M1260 506L1267 513M1267 506L1260 513" stroke-width="1.5" stroke="#3a1a10"/>
</g>
</svg>


<!-- PALETTE -->
<div class="grip" style="left:1px;top:920px;height:28px"></div>
<div class="a" style="left:6px;top:920px;width:31px;height:28px;border:1px solid #5a5a5a;border-radius:3px;background:linear-gradient(90deg,#fff,#d8d8d8)"></div>
<div class="a pc" style="left:10px;top:923px;width:25px;height:24px;background:#000000;color:#fff">00</div>
<div class="a pc" style="left:40px;top:922px;width:24px;height:24px;background:#0000ff;color:#fff">01</div>
<div class="a pc" style="left:71px;top:922px;width:24px;height:24px;background:#ff0000;color:#fff">02</div>
<div class="a pc" style="left:102px;top:922px;width:24px;height:24px;background:#00e000;color:#000">03</div>
<div class="a pc" style="left:133px;top:922px;width:24px;height:24px;background:#d0d000;color:#000">04</div>
<div class="a pc" style="left:164px;top:922px;width:24px;height:24px;background:#ff8000;color:#000">05</div>
<div class="a pc" style="left:195px;top:922px;width:24px;height:24px;background:#00e0e0;color:#000">06</div>
<div class="a pc" style="left:226px;top:922px;width:24px;height:24px;background:#ff00ff;color:#fff">07</div>
<div class="a pc" style="left:257px;top:922px;width:24px;height:24px;background:#b4b4b4;color:#000">08</div>
<div class="a pc" style="left:288px;top:922px;width:24px;height:24px;background:#0000a0;color:#fff">09</div>
<div class="a pc" style="left:319px;top:922px;width:24px;height:24px;background:#a00000;color:#fff">10</div>
<div class="a pc" style="left:350px;top:922px;width:24px;height:24px;background:#00a000;color:#fff">11</div>
<div class="a pc" style="left:381px;top:922px;width:24px;height:24px;background:#a0a000;color:#000">12</div>
<div class="a pc" style="left:412px;top:922px;width:24px;height:24px;background:#c08000;color:#000">13</div>
<div class="a pc" style="left:443px;top:922px;width:24px;height:24px;background:#00a0ff;color:#fff">14</div>
<div class="a pc" style="left:474px;top:922px;width:24px;height:24px;background:#a000a0;color:#fff">15</div>
<div class="a pc" style="left:505px;top:922px;width:24px;height:24px;background:#808080;color:#fff">16</div>
<div class="a pc" style="left:536px;top:922px;width:24px;height:24px;background:#7d87b9;color:#000">17</div>
<div class="a pc" style="left:567px;top:922px;width:24px;height:24px;background:#bb7784;color:#000">18</div>
<div class="a pc" style="left:598px;top:922px;width:24px;height:24px;background:#4a6fe3;color:#fff">19</div>
<div class="a pc" style="left:629px;top:922px;width:24px;height:24px;background:#d33f6a;color:#fff">20</div>
<div class="a pc" style="left:660px;top:922px;width:24px;height:24px;background:#8cd78c;color:#000">21</div>
<div class="a pc" style="left:691px;top:922px;width:24px;height:24px;background:#f0b98d;color:#000">22</div>
<div class="a pc" style="left:722px;top:922px;width:24px;height:24px;background:#f6c4e1;color:#000">23</div>
<div class="a pc" style="left:753px;top:922px;width:24px;height:24px;background:#fa9ed4;color:#000">24</div>
<div class="a pc" style="left:784px;top:922px;width:24px;height:24px;background:#500a78;color:#fff">25</div>
<div class="a pc" style="left:815px;top:922px;width:24px;height:24px;background:#b45a00;color:#fff">26</div>
<div class="a pc" style="left:846px;top:922px;width:24px;height:24px;background:#004754;color:#fff">27</div>
<div class="a pc" style="left:877px;top:922px;width:24px;height:24px;background:#86fa88;color:#000">28</div>
<div class="a pc" style="left:908px;top:922px;width:24px;height:24px;background:#ffdb66;color:#000">29</div>
<div class="sep" style="left:938px;top:921px;height:26px"></div>
<div class="a pc" style="left:945px;top:922px;width:24px;height:24px;background:#f36926;color:#000">T1</div>
<div class="a pc" style="left:976px;top:922px;width:24px;height:24px;background:#0c96d9;color:#fff">T2</div>

<!-- STATUS -->

<div class="tg" style="left:-2px;top:957px"></div><span class="t stt" style="left:19px">Move</span>
<div class="sep" style="left:53px;top:952px;height:17px"></div>
<div class="tg" style="left:58px;top:957px"></div><span class="t stt" style="left:79px">Size</span>
<div class="sep" style="left:106px;top:952px;height:17px"></div>
<div class="tg" style="left:111px;top:957px"></div><span class="t stt" style="left:132px">Rotate</span>
<div class="sep" style="left:173px;top:952px;height:17px"></div>
<div class="tg" style="left:178px;top:957px"></div><span class="t stt" style="left:199px">Shear</span>
<div class="sep" style="left:244px;top:952px;height:17px"></div>
<span class="t stt" style="left:249px">x: 174.00, y: 358.00 mm</span>
<div class="sep" style="left:641px;top:952px;height:17px"></div>
<div class="sep" style="left:1114px;top:952px;height:17px"></div>
<div class="a" style="left:12px;top:967px;width:22px;height:10px;border:1.5px solid #3a4a5a;border-radius:50%;background:#b8d0e8"></div>


<!-- DIALOG -->
<!-- DIALOG shadow -->
<div class="a" style="left:131px;top:73px;width:601px;height:370px;border-radius:7px;box-shadow:2px 3px 8px rgba(0,0,0,0.35)"></div>
<!-- frame glass -->
<div class="a" style="left:131px;top:73px;width:601px;height:370px;border:1px solid #4a5560;border-radius:7px 7px 6px 6px;background:linear-gradient(#f2fbfd 0px,#e4f6fb 10px,#e8f8fc 26px,#f0fafd 40px,#f4fbfd 100%);overflow:hidden">
 <div class="a" style="left:0;top:0;width:599px;height:29px;background:linear-gradient(90deg,rgba(255,255,255,0.5),rgba(255,255,255,0) 25%,rgba(255,255,255,0.3) 60%,rgba(255,255,255,0) 100%)"></div>
 <div class="a" style="left:443px;top:7px;width:14px;height:12px;border-radius:50%;background:rgba(50,60,70,0.65);filter:blur(2.5px)"></div>
 <div class="a" style="left:444px;top:24px;width:12px;height:4px;border-radius:50%;background:rgba(50,60,70,0.5);filter:blur(1.5px)"></div>
 <div class="a" style="left:527px;top:24px;width:12px;height:4px;border-radius:50%;background:rgba(50,60,70,0.4);filter:blur(1.5px)"></div>
 <div class="a" style="left:520px;top:8px;width:16px;height:12px;border-radius:50%;background:rgba(50,60,70,0.3);filter:blur(3px)"></div>
 <div class="a" style="left:360px;top:9px;width:60px;height:7px;border-radius:40%;background:rgba(100,150,190,0.22);filter:blur(2.5px)"></div>
 <div class="a" style="left:470px;top:10px;width:40px;height:6px;border-radius:40%;background:rgba(100,150,190,0.18);filter:blur(2.5px)"></div>
 <div class="a" style="left:258px;top:7px;width:12px;height:8px;border-radius:50%;background:rgba(80,130,180,0.3);filter:blur(2.5px)"></div>
 <div class="a" style="left:323px;top:-2px;width:12px;height:7px;border-radius:50%;background:rgba(80,130,180,0.3);filter:blur(2.5px)"></div>
 <div class="a" style="left:-6px;top:8px;width:14px;height:18px;border-radius:50%;background:rgba(40,40,40,0.35);filter:blur(3px)"></div>
 <div class="a" style="left:20px;top:22px;width:70px;height:5px;border-radius:40%;background:rgba(100,150,190,0.18);filter:blur(2px)"></div>
 <div class="a" style="left:100px;top:22px;width:60px;height:5px;border-radius:40%;background:rgba(100,150,190,0.15);filter:blur(2px)"></div>
</div>
<!-- title -->
<svg class="a" style="left:138px;top:79px" width="17" height="17" viewBox="0 0 17 17">
 <defs><linearGradient id="lbg" x1="0" y1="0.3" x2="1" y2="0.7"><stop offset="0" stop-color="#4a1010"/><stop offset="0.5" stop-color="#8a1818"/><stop offset="1" stop-color="#d0202a"/></linearGradient></defs>
 <rect x="1" y="0.8" width="15.5" height="15.5" rx="0.8" fill="url(#lbg)"/>
 <path d="M1.5 5.5Q4 2 8 2.6Q11.5 3.2 12.5 7" fill="none" stroke="#f6e0e0" stroke-width="1.3"/>
 <path d="M3 14Q2.5 10 6 8.5Q9 7.5 11 9.5Q12.5 11.5 12 15H9.5Q10 12.5 8.5 11.5Q6.5 11 5 13Z" fill="#f2d8d8"/>
 <path d="M4.5 11.5L7.5 12.5" stroke="#8a1818" stroke-width="0.9"/>
</svg>
<div class="a" style="left:128.5px;top:87px;width:3px;height:10px;border-radius:50%;background:rgba(30,30,30,0.5);filter:blur(1px)"></div>
<span class="t" style="left:161px;top:82px;font-size:11.8px;color:#101418">Preview - LightBurn 1.4.00</span>
<!-- caption buttons -->
<div class="a" style="left:622px;top:73px;width:103px;height:19px;border:1px solid #8a96a4;border-top:none;border-radius:0 0 5px 5px;background:linear-gradient(rgba(255,255,255,0.55),rgba(230,244,250,0.35) 50%,rgba(200,225,240,0.35))"></div>
<div class="a" style="left:650px;top:73px;width:1px;height:19px;background:#9aa6b2"></div>
<div class="a" style="left:677px;top:73px;width:1px;height:19px;background:#9aa6b2"></div>
<div class="a" style="left:630px;top:82px;width:12px;height:5px;border:1.3px solid #3a4048;border-radius:1px;background:#fff"></div>
<div class="a" style="left:657px;top:77px;width:13px;height:10px;border:1.3px solid #3a4048;border-radius:1px;background:#e8eef2"><div class="a" style="left:2.5px;top:2px;width:6px;height:4px;border:1.3px solid #3a4048"></div></div>
<svg class="a" style="left:692px;top:76px" width="20" height="14" viewBox="0 0 20 14"><path d="M4 2.5H7.5L10 5.5L12.5 2.5H16L12 7L16 11.5H12.5L10 8.5L7.5 11.5H4L8 7Z" fill="#fff" stroke="#3a4048" stroke-width="1.1" stroke-linejoin="round"/></svg>
<!-- client area -->
<div class="a" style="left:138px;top:102px;width:587px;height:334px;border:1px solid #5f6a74;background:#f0f0f0"></div>
<div class="a" style="left:139px;top:103px;width:585px;height:235px;background:#fff"></div>
<div class="a" style="left:139px;top:338px;width:585px;height:5px;background:#ebebeb"></div>
<div class="a" style="left:210px;top:103px;width:1.2px;height:234px;background:#b8e8b8"></div>
<div class="a" style="left:644.5px;top:103px;width:1.2px;height:234px;background:#b8e8b8"></div>
<div class="a" style="left:209.5px;top:333px;width:2px;height:4px;background:#d05050"></div>
<svg class="a" style="left:331px;top:113px" width="202" height="216" viewBox="331 113 202 216">
 <rect x="331" y="113.6" width="201" height="215.2" fill="#000"/>
 <path d="M404 179.5H454.6L480 214.9L454.6 250.7H404L378 214.9Z" fill="#fff"/>
 <path d="M386.2 146.4L392.1 158.5L510.2 135.3" fill="none" stroke="#3c0c0c" stroke-width="1"/>
 <path d="M392.1 158.5L398 179.5" fill="none" stroke="#1c0404" stroke-width="1"/>
 <path d="M384.7 206.7L439.8 179.5" fill="none" stroke="#ecc8c8" stroke-width="0.8"/>
</svg>
<!-- scroll slider -->
<div class="a" style="left:141px;top:349px;width:574px;height:2px;border-top:1px solid #8c8c8c;border-bottom:1px solid #fff"></div>
<div class="a" style="left:711px;top:343px;width:10px;height:17px;border:1px solid #6a6a6a;border-radius:2px;background:linear-gradient(#fafafa,#e6e6e6 55%,#d8d8d8)"></div>
<!-- text rows -->
<span class="t dt" style="left:188px;top:367px">Cut distance: 241942 mm (~1:21:14)</span>
<span class="t dt" style="left:376px;top:367px">Rapid moves: 676 mm (~0:09)</span>
<span class="t dt" style="left:532px;top:367px">Total time estimated: 1:21:24</span>
<span class="t dt" style="left:140px;top:390px">Playback Speed</span>
<div class="a" style="left:226px;top:390px;width:44px;height:3px;border-top:1px solid #a0a0a0;border-bottom:1px solid #fff"></div>
<div class="a" style="left:267px;top:384px;width:10px;height:18px;border:1px solid #6e6e6e;border-radius:2px;background:linear-gradient(#fafafa,#e8e8e8 55%,#d6d6d6)"></div>
<span class="t dt" style="left:288px;top:390px">x 40</span>
<div class="tg" style="left:327px;top:389.5px"></div>
<span class="t dt" style="left:348px;top:390px">Show traversal moves</span>
<div class="tgr" style="left:465px;top:389.5px"></div>
<span class="t dt" style="left:486px;top:390px">Shade according to power</span>
<div class="tgr" style="left:622px;top:389.5px"></div>
<span class="t dt" style="left:644px;top:390px">Invert</span>
<span class="t dt" style="left:684px;top:390px">1:21:24</span>
<span class="t dt" style="left:144px;top:416px;font-size:10.6px">Black lines are cuts, Red lines are moves between cuts</span>
<div class="btnd" style="left:411px;top:411px;width:73px;height:21px;line-height:19px;font-size:10.8px">Start here</div>
<div class="btn" style="left:490px;top:411px;width:73px;height:21px;line-height:19px;font-size:10.8px">Save Image</div>
<div class="btn" style="left:569px;top:411px;width:73px;height:21px;line-height:19px;font-size:10.8px">Play</div>
<div class="btn" style="left:648px;top:411px;width:73px;height:21px;line-height:19px;font-size:10.8px">Ok</div>
<svg class="a" style="left:714px;top:425px" width="10" height="10"><path d="M8.5 2.5V8.5H2.5M8.5 5.5L5.5 8.5" stroke="#a8a8a8" stroke-width="1" stroke-dasharray="1 1" fill="none"/></svg>


</body></html>
